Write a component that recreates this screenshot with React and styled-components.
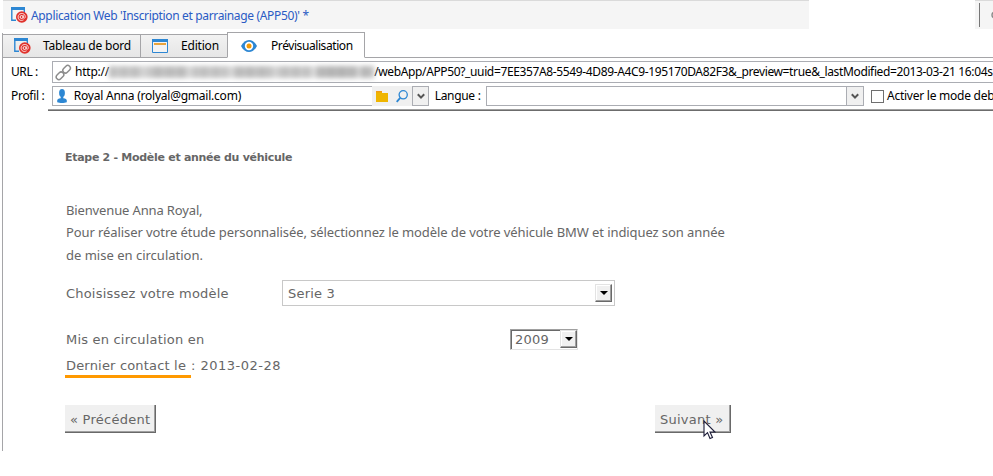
import React from 'react';
import styled, { createGlobalStyle } from 'styled-components';

const Global = createGlobalStyle`
  * { box-sizing: border-box; }
  body { margin: 0; background: #fff; overflow: hidden; }
`;

const Window = styled.div`
  width: 993px;
  height: 476px;
  overflow: hidden;
  background: #fff;
  color: #000;
  font: 12px/16px "Noto Sans", "Open Sans", sans-serif;
`;

const TitleRow = styled.header`
  display: flex;
  justify-content: space-between;
  height: 29px;
  margin-left: 3px;
`;

const TitleBar = styled.div`
  display: flex;
  align-items: center;
  width: 806px;
  padding: 1px 0 0 8px;
  gap: 3px;
  border-top: 1px solid #dadada;
  background: #f5f5f5;
  color: #2a5bc4;
`;

const TitleTools = styled.div`
  width: 18px;
  padding: 2px 0 0 4px;
  border-top: 1px solid #dadada;
  background: #f5f5f5;
  overflow: hidden;
  svg { display: block; }
`;

const Label = styled.span`
  flex: none;
  white-space: pre;
  letter-spacing: ${(p) => p.$track || 0}px;
`;

const Frame = styled.main`
  height: 418px;
  margin: 4px 0 0 2px;
  border-left: 1px solid #a5a5a8;
`;

const Tabs = styled.nav`
  display: flex;
  align-items: flex-end;
  height: 25px;
  margin-left: -1px;
`;

const Tab = styled.div`
  display: flex;
  align-items: center;
  width: ${(p) => p.$width}px;
  height: ${(p) => (p.$active ? 26 : 24)}px;
  padding: ${(p) => (p.$active ? 2 : 0)}px 0 0 ${(p) => p.$pad}px;
  gap: ${(p) => p.$gap}px;
  border: 1px solid #a5a5a8;
  border-right-width: ${(p) => (p.$active ? 1 : 0)}px;
  border-bottom-color: ${(p) => (p.$active ? '#fff' : '#a5a5a8')};
  background: ${(p) => (p.$active ? '#fff' : 'linear-gradient(#f2f2f2, #e6e6e6)')};
`;

const TabRule = styled.div`
  flex: 1;
  align-self: stretch;
  border-bottom: 1px solid #a5a5a8;
`;

const FieldRow = styled.div`
  display: flex;
  align-items: center;
  height: ${(p) => p.$height}px;
  margin-top: ${(p) => p.$top}px;
  padding-left: 8px;
`;

const FieldLabel = styled(Label)`
  width: ${(p) => p.$width}px;
`;

const Field = styled.div`
  display: flex;
  align-items: center;
  flex: none;
  width: ${(p) => p.$width}px;
  height: 100%;
  padding-left: ${(p) => p.$pad || 0}px;
  border: 1px solid #abadb3;
  border-right-width: ${(p) => (p.$open ? 0 : 1)}px;
  svg { flex: none; }
`;

const Redacted = styled.span`
  width: 265px;
  height: 12px;
  flex: none;
  background:
    linear-gradient(90deg, transparent 78%, rgba(120, 120, 120, .12) 80%),
    repeating-linear-gradient(90deg, rgba(140, 140, 140, .18) 0 4px, transparent 7px 11px, rgba(140, 140, 140, .15) 13px 17px, transparent 19px 23px),
    repeating-linear-gradient(90deg, #c8c8c8 0 31px, #dcdcdc 35px 38px, #c2c2c2 43px 76px, #e0e0e0 81px 84px);
  filter: blur(2.5px);
`;

const FieldTools = styled.div`
  display: flex;
  align-items: center;
  flex: none;
  width: 40px;
  height: 100%;
  padding-left: 4px;
  gap: 8px;
  background: #f0f0f0;
`;

const Drop = styled.span`
  display: flex;
  align-items: center;
  justify-content: center;
  flex: none;
  width: 17px;
  height: 100%;
  margin-left: ${(p) => (p.$end ? 'auto' : '0')};
  border: solid #abadb3;
  border-width: ${(p) => (p.$end ? '0 0 0 1px' : '1px')};
  background: #f0f0f0;
`;

const Check = styled.span`
  flex: none;
  width: 13px;
  height: 13px;
  margin: 0 3px 0 7px;
  border: 1px solid #6f6f6f;
`;

const Page = styled.section`
  width: 690px;
  margin-left: 45px;
  padding: 0 0 0 17px;
  color: #666;
  font: 13px/22px "DejaVu Sans", sans-serif;
`;

const PageRule = styled.div`
  height: 2px;
  margin: 3px 0 0 45px;
  background: #6c6c6c;
  border-top: 1px solid #a0a0a0;
`;

const Heading = styled.h1`
  margin: 37px 0 0;
  font: bold 11px/20px "DejaVu Sans", sans-serif;
`;

const Copy = styled.div`
  display: flex;
  flex-direction: column;
  margin: 31px 0 0 1px;
  font: 13px/22.4px "Noto Sans", sans-serif;
`;

const FormRow = styled.div`
  display: flex;
  align-items: center;
  height: ${(p) => p.$height}px;
  margin: ${(p) => p.$top}px 0 0 1px;
`;

const FormText = styled(Label)`
  padding-top: 2px;
`;

const FormLabel = styled(FormText)`
  width: ${(p) => p.$width}px;
`;

const Select = styled.div`
  display: flex;
  align-items: center;
  justify-content: space-between;
  width: 333px;
  height: 26px;
  padding: 0 2px 0 5px;
  border: 1px solid #c8c8c8;
`;

const YearSelect = styled(Select)`
  width: 68px;
  height: 21px;
  padding: 0 0 0 4px;
  border-color: #a0a0a0 #e3e3e3 #e3e3e3 #a0a0a0;
  box-shadow: inset 1px 1px #696969;
`;

const Stepper = styled.span`
  display: flex;
  align-items: center;
  justify-content: center;
  width: 17px;
  height: 18px;
  background: #f0f0f0;
  border: 1px solid;
  border-color: #e3e3e3 #696969 #696969 #e3e3e3;
  box-shadow: inset -1px -1px #a0a0a0, inset 1px 1px #fff;
`;

const Marked = styled(Label)`
  display: block;
  width: 126px;
  height: 25px;
  margin-left: -1px;
  padding: 2px 0 0 1px;
  border-bottom: 3px solid #f90;
`;

const Actions = styled.div`
  display: flex;
  justify-content: space-between;
  width: 666px;
  margin-top: 27px;
`;

const Button = styled.div`
  position: relative;
  width: ${(p) => p.$width}px;
  height: 28px;
  padding: 4px 0 0 5px;
  background: #f0f0f0;
  border: solid #696969;
  border-width: 0 1px 1px 0;
  box-shadow: inset -1px -1px #a0a0a0;
`;

const Pointer = styled.svg`
  position: absolute;
  left: 48px;
  top: 15px;
`;

const AppIcon = () => (
  <svg width="17" height="17" viewBox="0 0 17 17">
    <path d="M.8 3v10.300H5M13.300 3v3" fill="none" stroke="#2d87d3" strokeWidth="1.400" />
    <path d="M0 0h14v3H0z" fill="#2d87d3" />
    <circle cx="10.800" cy="10" r="5.800" fill="#e0322c" />
    <circle cx="10.600" cy="10" r="1.500" fill="none" stroke="#fff" strokeWidth=".9" />
    <path d="M12.300 8.300v2.200c0 1.300 2 1 2-.7 0-4.600-7.200-4.400-7.200.2 0 3.300 3.200 4.200 5.500 2.800" fill="none" stroke="#fff" strokeWidth=".8" />
  </svg>
);

const EditIcon = () => (
  <svg width="16" height="14" viewBox="0 0 16 14">
    <path d="M.5.5h15v13H.5z" fill="#f3f3f3" stroke="#2d87d3" />
    <path d="M0 0h16v3H0z" fill="#2d87d3" />
    <path d="M2 4h12v2H2z" fill="#e9a43b" />
  </svg>
);

const EyeIcon = () => (
  <svg width="16" height="12" viewBox="0 0 16 12">
    <path d="M0 6C4-2 12-2 16 6 12 14 4 14 0 6z" fill="#2d87d3" />
    <circle cx="8" cy="6" r="4.200" fill="#fff" />
    <circle cx="8" cy="6" r="2.500" fill="#f39a05" />
  </svg>
);

const LinkIcon = () => (
  <svg width="17" height="17" viewBox="0 0 17 17" fill="none" stroke="#8c8c8c" strokeWidth="1.500">
    <rect x="-4.200" y="-2.600" width="8.400" height="5.200" rx="2.600" transform="translate(5 11.800) rotate(-45)" />
    <rect x="-4.200" y="-2.600" width="8.400" height="5.200" rx="2.600" transform="translate(11.600 5.200) rotate(-45)" />
  </svg>
);

const PersonIcon = () => (
  <svg width="12" height="14" viewBox="0 0 12 14" fill="#2d87d3">
    <ellipse cx="6" cy="3.900" rx="2.900" ry="3.900" />
    <path d="M4.700 6h2.600v3.200c2.400.3 3.500 1.200 3.500 2.400v1.600c-2.500 1-7.100 1-9.600 0v-1.600c0-1.200 1.100-2.100 3.500-2.400z" />
  </svg>
);

const FolderIcon = () => (
  <svg width="12" height="11" viewBox="0 0 12 11">
    <path d="M0 0h6v2h6v9H0z" fill="#efb500" />
    <path d="M0 0h6v1.300H0z" fill="#f29a17" />
  </svg>
);

const SearchIcon = () => (
  <svg width="12" height="13" viewBox="0 0 12 13" fill="none" stroke="#2d87d3">
    <circle cx="7.200" cy="4.800" r="4.100" strokeWidth="1.300" />
    <path d="M4.200 7.900L.7 11.900" strokeWidth="1.800" />
  </svg>
);

const Chevron = () => (
  <svg width="8" height="7" viewBox="0 0 8 7">
    <path d="M.8 1.200L4 4.600l3.200-3.400" fill="none" stroke="#555" strokeWidth="2" />
  </svg>
);

const Triangle = () => (
  <svg width="8" height="4" viewBox="0 0 8 4">
    <path d="M0 0h8L4 4z" fill="#000" />
  </svg>
);

export default function App() {
  return (
    <Window>
      <Global />
      <TitleRow>
        <TitleBar>
          <AppIcon />
          <Label $track={-0.34}>Application Web 'Inscription et parrainage (APP50)' *</Label>
        </TitleBar>
        <TitleTools>
          <svg width="14" height="24" viewBox="0 0 14 24">
            <path d="M.5 0v24" stroke="#777" />
            <circle cx="16" cy="12" r="3" fill="none" stroke="#888" strokeWidth="1.500" />
          </svg>
        </TitleTools>
      </TitleRow>
      <Frame>
        <Tabs>
          <Tab $width={138} $pad={11} $gap={12}>
            <AppIcon />
            <Label $track={-0.2}>Tableau de bord</Label>
          </Tab>
          <Tab $width={87} $pad={11} $gap={13}>
            <EditIcon />
            <Label $track={-0.2}>Edition</Label>
          </Tab>
          <Tab $active $width={138} $pad={13} $gap={14}>
            <EyeIcon />
            <Label $track={-0.42}>Prévisualisation</Label>
          </Tab>
          <TabRule />
        </Tabs>
        <FieldRow $height={22} $top={3}>
          <FieldLabel $width={41} $track={-0.4}>URL :</FieldLabel>
          <Field $width={941} $pad={2} $open>
            <LinkIcon />
            <Label $track={-0.2}> http://</Label>
            <Redacted />
            <Label $track={-0.365}>/webApp/APP50?_uuid=7EE357A8-5549-4D89-A4C9-195170DA82F3&amp;_preview=true&amp;_lastModified=2013-03-21 16:04s</Label>
          </Field>
        </FieldRow>
        <FieldRow $height={20} $top={3}>
          <FieldLabel $width={41} $track={-0.3}>Profil :</FieldLabel>
          <Field $width={320} $pad={3} $open>
            <PersonIcon />
            <Label $track={-0.23}>  Royal Anna (rolyal@gmail.com)</Label>
          </Field>
          <FieldTools>
            <FolderIcon />
            <SearchIcon />
          </FieldTools>
          <Drop><Chevron /></Drop>
          <FieldLabel $width={57} $track={-0.3}>  Langue :</FieldLabel>
          <Field $width={378}>
            <Drop $end><Chevron /></Drop>
          </Field>
          <Check />
          <Label $track={-0.25}>Activer le mode deb</Label>
        </FieldRow>
        <PageRule />
        <Page>
          <Heading><Label $track={-0.29}>Etape 2 - Modèle et année du véhicule</Label></Heading>
          <Copy>
            <Label $track={-0.14}>Bienvenue Anna Royal,</Label>
            <Label $track={-0.085}>Pour réaliser votre étude personnalisée, sélectionnez le modèle de votre véhicule BMW et indiquez son année</Label>
            <Label>de mise en circulation.</Label>
          </Copy>
          <FormRow $height={26} $top={13.3}>
            <FormLabel $width={216} $track={0.2}>Choisissez votre modèle</FormLabel>
            <Select><FormText $track={0.2}>Serie 3</FormText><Stepper><Triangle /></Stepper></Select>
          </FormRow>
          <FormRow $height={21} $top={23}>
            <FormLabel $width={444} $track={0.2}>Mis en circulation en</FormLabel>
            <YearSelect><FormText $track={0.2}>2009</FormText><Stepper><Triangle /></Stepper></YearSelect>
          </FormRow>
          <FormRow $height={25} $top={3}>
            <Marked $track={0.18}>Dernier contact le</Marked>
            <FormText $track={0.5}>: 2013-02-28</FormText>
          </FormRow>
          <Actions>
            <Button $width={91}><Label $track={0.25}>« Précédent</Label></Button>
            <Button $width={76}>
              <Label $track={0.25}>Suivant »</Label>
              <Pointer width="13" height="20" viewBox="0 0 13 20">
                <path d="M1 1v15l3.500-3.400L7 18.500l2.500-1L7 12h5z" fill="#fff" stroke="#1c1c38" strokeWidth="1.100" />
              </Pointer>
            </Button>
          </Actions>
        </Page>
      </Frame>
    </Window>
  );
}
